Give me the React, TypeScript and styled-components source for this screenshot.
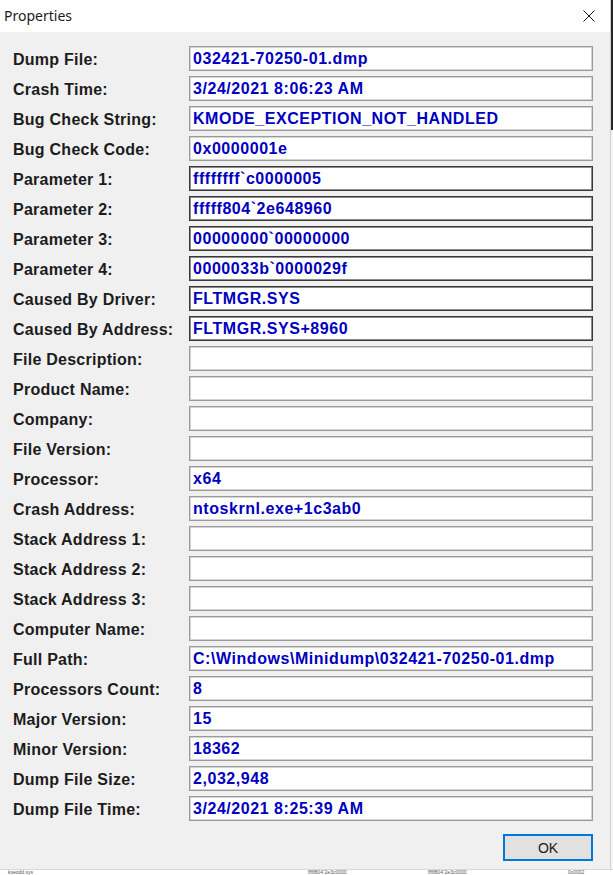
import React from 'react';
import styled, { createGlobalStyle } from 'styled-components';

// 덤프 속성 목록
const rows: { label: string; value: string; dark?: boolean }[] = [
  { label: 'Dump File:', value: '032421-70250-01.dmp' },
  { label: 'Crash Time:', value: '3/24/2021 8:06:23 AM' },
  { label: 'Bug Check String:', value: 'KMODE_EXCEPTION_NOT_HANDLED' },
  { label: 'Bug Check Code:', value: '0x0000001e' },
  { label: 'Parameter 1:', value: 'ffffffff`c0000005', dark: true },
  { label: 'Parameter 2:', value: 'fffff804`2e648960', dark: true },
  { label: 'Parameter 3:', value: '00000000`00000000', dark: true },
  { label: 'Parameter 4:', value: '0000033b`0000029f', dark: true },
  { label: 'Caused By Driver:', value: 'FLTMGR.SYS', dark: true },
  { label: 'Caused By Address:', value: 'FLTMGR.SYS+8960', dark: true },
  { label: 'File Description:', value: '' },
  { label: 'Product Name:', value: '' },
  { label: 'Company:', value: '' },
  { label: 'File Version:', value: '' },
  { label: 'Processor:', value: 'x64' },
  { label: 'Crash Address:', value: 'ntoskrnl.exe+1c3ab0' },
  { label: 'Stack Address 1:', value: '' },
  { label: 'Stack Address 2:', value: '' },
  { label: 'Stack Address 3:', value: '' },
  { label: 'Computer Name:', value: '' },
  { label: 'Full Path:', value: 'C:\\Windows\\Minidump\\032421-70250-01.dmp' },
  { label: 'Processors Count:', value: '8' },
  { label: 'Major Version:', value: '15' },
  { label: 'Minor Version:', value: '18362' },
  { label: 'Dump File Size:', value: '2,032,948' },
  { label: 'Dump File Time:', value: '3/24/2021 8:25:39 AM' },
];

const App: React.FC = () => {
  return (
    <>
      <GlobalStyle />
      <Screen>
        <Top>
          <Dialog>
            <TitleBar>
              <Title>Properties</Title>
              <CloseButton aria-label="Close">
                <svg width="12" height="12" viewBox="0 0 12 12">
                  <path d="M0.5 0.5 L11.5 11.5 M11.5 0.5 L0.5 11.5" stroke="#111" strokeWidth="1" fill="none" />
                </svg>
              </CloseButton>
            </TitleBar>
            <Body>
              <Form>
                {rows.map((row) => (
                  <React.Fragment key={row.label}>
                    <Label>{row.label}</Label>
                    <Field $dark={row.dark}>{row.value}</Field>
                  </React.Fragment>
                ))}
              </Form>
              <Footer>
                <OkButton>OK</OkButton>
              </Footer>
            </Body>
          </Dialog>
          <SideStrip>
            <SideDark />
          </SideStrip>
        </Top>
        <BehindRow>
          <BehindText $w={300}>kseodd.sys</BehindText>
          <BehindText $w={120}>fffff804`2e3c0000</BehindText>
          <BehindText $w={140}>fffff804`2e3c0000</BehindText>
          <BehindText $w={40}>0x0002</BehindText>
        </BehindRow>
      </Screen>
    </>
  );
};

export default App;

const GlobalStyle = createGlobalStyle`
  body {
    margin: 0;
    background: #f7f7f7;
    font-family: "Liberation Sans", Arial, sans-serif;
  }
`;

//전체 화면
const Screen = styled.div`
  width: 613px;
  height: 875px;
  overflow: hidden;
  display: flex;
  flex-direction: column;
`;

const Top = styled.div`
  display: flex;
  height: 869px;
`;

//대화상자
const Dialog = styled.div`
  width: 610px;
  display: flex;
  flex-direction: column;
  background: #f0f0f0;
`;

//제목 표시줄
const TitleBar = styled.div`
  height: 32px;
  background: #ffffff;
  display: flex;
  align-items: center;
  justify-content: space-between;
  padding: 0 15px 0 4px;
`;

const Title = styled.span`
  font-family: "Noto Sans", "Open Sans", sans-serif;
  font-size: 14px;
  color: #1a1a1a;
  margin-top: -1px;
`;

const CloseButton = styled.div`
  width: 12px;
  height: 12px;
  display: flex;
  margin-top: -1px;
`;

const Body = styled.div`
  flex: 1;
  padding: 14px 17px 8px 13px;
  display: flex;
  flex-direction: column;
`;

const Form = styled.div`
  display: grid;
  grid-template-columns: 176px 404px;
  grid-auto-rows: 25px;
  row-gap: 5px;
`;

//라벨
const Label = styled.div`
  font-weight: bold;
  font-size: 16px;
  letter-spacing: 0.25px;
  color: #1c1c1c;
  line-height: 22px;
  padding-top: 3px;
  white-space: nowrap;
`;

//값 입력창
const Field = styled.div<{ $dark?: boolean }>`
  box-sizing: border-box;
  height: 25px;
  background: #ffffff;
  border: 1px solid ${(p) => (p.$dark ? '#3a3a3a' : '#9a9a9a')};
  box-shadow: inset 0 0 0 1px ${(p) => (p.$dark ? '#8a8a8a' : '#d4d4d4')};
  padding: 1px 3px 0;
  line-height: 22px;
  font-weight: bold;
  font-size: 16px;
  letter-spacing: 0.55px;
  color: #0000c0;
  white-space: nowrap;
  overflow: hidden;
`;

const Footer = styled.div`
  display: flex;
  justify-content: flex-end;
  margin-top: 13px;
`;

//확인 버튼
const OkButton = styled.button`
  width: 90px;
  height: 27px;
  background: #e1e1e1;
  border: 2px solid #0078d7;
  font-family: "Liberation Sans", Arial, sans-serif;
  font-size: 14px;
  color: #1a1a1a;
  padding: 0;
  cursor: pointer;
`;

const SideStrip = styled.div`
  flex: 1;
  display: flex;
  flex-direction: column;
  background: #f4f4f4;
  border-left: 1px solid #d0d0d0;
`;

const SideDark = styled.div`
  height: 130px;
  background: #262626;
`;

//뒤쪽 창의 일부
const BehindRow = styled.div`
  height: 6px;
  display: flex;
  align-items: center;
  background: #ffffff;
  border-top: 1px solid #d8d8d8;
  padding-left: 8px;
`;

const BehindText = styled.span<{ $w: number }>`
  width: ${(p) => p.$w}px;
  flex-shrink: 0;
  font-size: 5px;
  line-height: 5px;
  color: #555;
  white-space: nowrap;
`;
